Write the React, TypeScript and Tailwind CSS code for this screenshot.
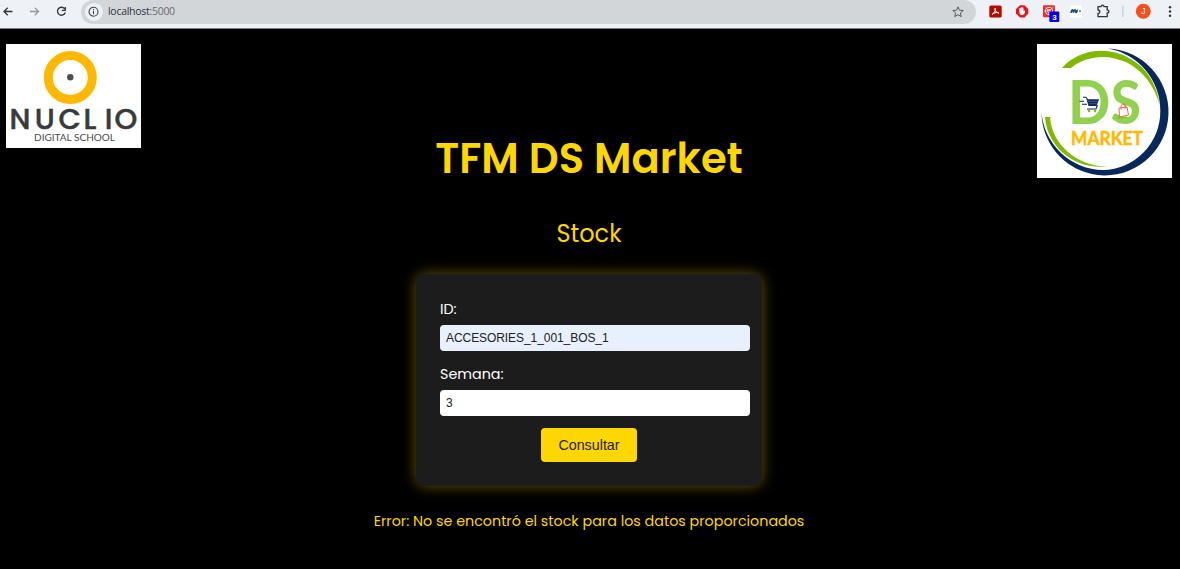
import React from 'react';

function NuclioLogo() {
  return (
    <svg viewBox="0 0 135 104" className="block h-[104px] w-[135px] shrink-0 bg-white" fontFamily="Lato, sans-serif">
      <circle cx="64.3" cy="33.5" r="22" fill="none" stroke="#ffb800" strokeWidth="9" />
      <circle cx="64.3" cy="33.3" r="3.2" fill="#4d4d4d" />
      <text x="3.4 28.8 52.4 77.6 98.8 108.6" y="85.2" fontFamily="Poppins, Lato, sans-serif" fontSize="29" fontWeight="500" fill="#3a3a3a" stroke="#3a3a3a" strokeWidth=".5">NUCLIO</text>
      <text x="28" y="97.2" fontSize="10" fill="#4a4a4a" textLength="81" lengthAdjust="spacingAndGlyphs">DIGITAL SCHOOL</text>
    </svg>
  );
}

function MarketLogo() {
  return (
    <svg viewBox="0 0 135 134" className="block h-[134px] w-[135px] shrink-0 bg-white" fontFamily="Lato, sans-serif">
      <path d="M71 4.5A63.5 63.5 0 1 1 4.5 68A62.5 62.5 0 0 0 66 126A58.5 58.5 0 0 0 123.3 67A63 63 0 0 0 71 4.5Z" fill="#08285b" />
      <path d="M25 24C42 5 70 2 92 14C112 25 120 42 123 62C117 41 106 27 90 18.5C70 9 48 12 34 24Z" fill="#80b900" />
      <path d="M8 73H13C15 101 40 122 70 122.5C38 126 10 103 8 73Z" fill="#80b900" />
      <text x="31" y="80" fontSize="61" fontWeight="700" fill="#92d050" textLength="73" lengthAdjust="spacingAndGlyphs">DS</text>
      <text x="34" y="101" fontSize="19" fontWeight="700" fill="#ffb900" stroke="#ffb900" strokeWidth=".5" textLength="72" lengthAdjust="spacingAndGlyphs">MARKET</text>
      <g stroke="#08285b" fill="none" strokeWidth="1.1">
        <path d="M46 53.2H49L50.5 55.5M42.5 57.3H47M45 60.3H50M50 65H59L60.5 61" />
        <path d="M49.5 55.3H62L59.5 62H51.5Z" fill="#08285b" stroke="none" />
        <path d="M51 57.3H60.5M52 59.7H59.5" stroke="#7f92ae" strokeWidth=".5" />
      </g>
      <circle cx="52" cy="67" r="1.2" fill="#80b900" />
      <circle cx="58" cy="67" r="1.2" fill="#80b900" />
      <path d="M82 64L90 63L91.5 71L82.5 73Z" fill="#fff" stroke="#ee5b32" strokeWidth=".9" />
      <path d="M84 66V62Q86 57.5 88 62V65M86 61Q88 58 89.5 64" fill="none" stroke="#ee5b32" strokeWidth=".8" />
      <path d="M80.5 74L90 73" stroke="#70b824" strokeWidth="1.2" />
    </svg>
  );
}

function BrowserBar() {
  return (
    <div className="flex h-[29px] w-full items-start border-b border-[#777b7e] bg-[#eef2f6]">
      <svg viewBox="0 0 81 24" className="h-6 w-[81px] shrink-0" fill="none" strokeWidth="1.3">
        <path d="M12.5 11.5H4M7.7 7.8L4 11.5L7.7 15.2" stroke="#303338" />
        <path d="M30 11.5H38.5M34.8 7.8L38.5 11.5L34.8 15.2" stroke="#94989c" />
        <path d="M64.5 8.6A4 4 0 1 0 65.3 12.5M65.3 7V10.4H61.8" stroke="#303338" />
      </svg>
      <div className="flex h-6 w-[895px] shrink-0 items-center rounded-r-full rounded-l-full bg-[#d2d6d9] pr-3 pl-1">
        <svg viewBox="0 0 18 18" className="h-[18px] w-[18px]" fill="none" stroke="#41454a" strokeWidth="1.1">
          <circle cx="9" cy="9" r="9" fill="#eef2f6" stroke="none" />
          <circle cx="8.5" cy="8.7" r="4.5" />
          <path d="M8.5 8.1V11.2M8.5 6V7.2" />
        </svg>
        <span className="ml-[5px] pb-px font-['Open_Sans',sans-serif] text-[10.5px] tracking-[-0.28px] text-[#303338]">localhost<span className="text-[#686c70]">:5000</span></span>
        <svg viewBox="0 0 12 12" className="ml-auto h-3 w-3" fill="none" stroke="#55595d" strokeWidth="1">
          <path d="M6 .9L7.5 4.2L11.2 4.6L8.4 7L9.2 10.6L6 8.7L2.8 10.6L3.6 7L.8 4.6L4.5 4.2Z" />
        </svg>
      </div>
      <svg viewBox="976 0 204 28" className="h-7 w-[204px] shrink-0" fontFamily="Liberation Sans, sans-serif">
        <rect x="989.3" y="5.5" width="12.4" height="12" rx="1.5" fill="#b30b00" />
        <path d="M992 14.5C995 13 996 9 995.3 8C994 9 996 13 999 13.2C998 11.8 994 12.5 992 14.5" fill="none" stroke="#fff" />
        <path d="M1020 5.3H1024.5L1028.3 9V13.5L1024.5 17.5H1020L1016 13.5V9Z" fill="#eb1419" />
        <path d="M1019.3 11V8.5Q1020 7.5 1020.5 8.5V7.8Q1021.3 6.5 1022 7.8V7.5Q1023 6.6 1023.5 8.5V11L1025 10.2V13Q1023.5 15.7 1021 15Q1019.5 14.5 1019.3 11Z" fill="#fff" />
        <rect x="1043" y="5.3" width="12" height="12" rx="1" fill="#e52e2d" />
        <circle cx="1049" cy="11" r="3.7" fill="none" stroke="#fff" strokeWidth=".8" />
        <circle cx="1049" cy="11" r="1.5" fill="none" stroke="#fff" strokeWidth=".7" />
        <path d="M1049 11L1045.5 7.5M1049 11L1053.5 7M1044 11H1047.5M1049 12.5V15.5" fill="none" stroke="#fff" strokeWidth=".7" />
        <rect x="1049.3" y="11.5" width="10" height="10.5" rx="1" fill="#0000f0" />
        <text x="1052.2" y="19.8" fontSize="8" fontWeight="700" fill="#fff">3</text>
        <rect x="1070" y="5.5" width="12" height="12" fill="#fff" />
        <path d="M1071 13C1071.8 9 1072.8 9 1073.5 12.5C1074.5 9 1075.6 9 1076 12.5C1077.3 12.5 1077 10 1078 10.5" fill="none" stroke="#174f7d" strokeWidth="1.7" />
        <circle cx="1080" cy="11" r="1" fill="#2485a7" />
        <path d="M1098 6.7H1101Q1101.3 5.2 1102.5 5.2Q1103.8 5.2 1104 6.7H1107.2V10Q1109 10.2 1109 11.5Q1109 12.8 1107.2 13V16.7H1098V13.5Q1100 13 1100 11.7Q1100 10.4 1098 10Z" fill="none" stroke="#303338" strokeWidth="1.3" />
        <path d="M1122.8 6V17" stroke="#c3ccd7" strokeWidth="1.3" />
        <circle cx="1143.3" cy="11.3" r="7.5" fill="#f4511e" />
        <text x="1143.3" y="14.4" textAnchor="middle" fontSize="8.5" fill="#fff">J</text>
        <g fill="#303338"><circle cx="1170" cy="7.3" r="1.2" /><circle cx="1170" cy="11.5" r="1.2" /><circle cx="1170" cy="15.7" r="1.2" /></g>
      </svg>
    </div>
  );
}

export default function App() {
  return (
    <div className="flex h-[569px] w-[1180px] flex-col overflow-hidden bg-black font-[Poppins,Inter,sans-serif] text-[#ffd700]">
      <BrowserBar />
      <main className="flex items-start pt-[15px] pr-2 pl-1.5">
        <NuclioLogo />
        <div className="flex flex-1 flex-col items-center">
          <h1 className="mt-[83px] text-[41.7px] leading-[64px] font-semibold whitespace-nowrap">TFM DS Market</h1>
          <h2 className="mt-[25px] text-[24px] leading-9 font-normal">Stock</h2>
          <form className="mt-[22px] flex h-[212px] w-[346px] flex-col rounded-[9px] bg-[#1c1c1c] pt-[23px] pr-3 pl-6 shadow-[0_0_14px_rgba(255,215,0,0.4)]" onSubmit={(e) => e.preventDefault()}>
            <label htmlFor="stock-id" className="h-[28px] text-[14.3px] leading-6 text-white">ID:</label>
            <input id="stock-id" defaultValue="ACCESORIES_1_001_BOS_1" className="h-[26px] w-[310px] shrink-0 rounded-[4px] bg-[#e8f0fe] px-1.5 font-['Liberation_Sans',sans-serif] text-[12px] tracking-[-0.07px] text-[#202124]" />
            <label htmlFor="week" className="mt-[11px] h-[28px] text-[14.3px] leading-6 text-white">Semana:</label>
            <input id="week" defaultValue="3" className="h-[26px] w-[310px] shrink-0 rounded-[4px] bg-white px-1.5 font-['Liberation_Sans',sans-serif] text-[12px] text-[#202124]" />
            <button className="mt-3 ml-[101px] h-[34px] w-[96px] shrink-0 rounded-[4px] bg-[#ffd700] pt-0.5 font-['Liberation_Sans',sans-serif] text-[14.3px] text-[#1c1c1c]">Consultar</button>
          </form>
          <p className="mt-[23px] text-[14.3px] leading-6 whitespace-nowrap">Error: No se encontró el stock para los datos proporcionados</p>
        </div>
        <MarketLogo />
      </main>
    </div>
  );
}
